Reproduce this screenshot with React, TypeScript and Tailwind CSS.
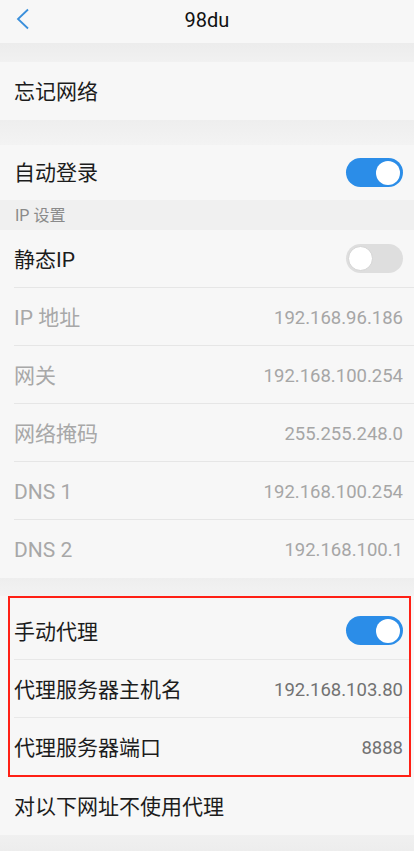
import React from 'react'

const font = { fontFamily: '"Roboto", "Noto Sans CJK SC", sans-serif' }

function Toggle({ on }: { on: boolean }) {
  return on ? (
    <div className="flex h-[29px] w-[57px] items-center justify-end rounded-full bg-[#2b8de8] pr-[3px]">
      <div className="h-[24px] w-[24px] rounded-full bg-white" />
    </div>
  ) : (
    <div className="flex h-[29px] w-[57px] items-center rounded-full bg-[#dedede] pl-[2px]">
      <div className="h-[25px] w-[25px] rounded-full border border-[#d4d4d4] bg-white" />
    </div>
  )
}

function Row({
  label,
  value,
  dim,
  toggle,
  divider,
}: {
  label: string
  value?: string
  dim?: boolean
  toggle?: boolean
  divider?: boolean
}) {
  return (
    <div className="pl-[14px]">
      <div
        className={`flex h-[58px] items-center justify-between pr-[11px] ${
          divider ? 'border-b border-[#e6e6e6]' : ''
        }`}
      >
        <span className={`pt-[4px] text-[21px] ${dim ? 'text-[#a8a8a8]' : 'text-[#1c1c1c]'}`}>{label}</span>
        {value && <span className="pt-[4px] text-[18.5px] text-[#a6a6a6]">{value}</span>}
        {toggle !== undefined && <Toggle on={toggle} />}
      </div>
    </div>
  )
}

export default function App() {
  return (
    <div className="flex min-h-[851px] w-[414px] flex-col bg-[#f7f7f7]" style={font}>
      {/* header */}
      <div className="relative flex h-[43px] items-center justify-center pb-[3px]">
        <svg className="absolute left-[15px] top-[8px]" width="16" height="22" viewBox="0 0 16 22">
          <polyline points="13,1.5 3,11 13,20.5" fill="none" stroke="#3a8fdb" strokeWidth="1.8" />
        </svg>
        <span className="text-[20px] text-[#111]">98du</span>
      </div>
      <div className="h-[19px] bg-gradient-to-b from-[#ececec] to-[#f1f1f1]" />

      <Row label="忘记网络" />
      <div className="h-[25px] bg-gradient-to-b from-[#eeeeee] to-[#f3f3f3]" />

      <div className="flex h-[55px] items-center justify-between pl-[14px] pr-[11px]">
        <span className="pt-[3px] text-[21px] text-[#1c1c1c]">自动登录</span>
        <Toggle on={true} />
      </div>

      <div className="flex h-[30px] items-center bg-[#f0f0f0] pl-[15px]">
        <span className="pt-[2px] text-[16px] text-[#8a8a8a]">IP 设置</span>
      </div>

      <Row label="静态IP" toggle={false} divider />
      <Row label="IP 地址" value="192.168.96.186" dim divider />
      <Row label="网关" value="192.168.100.254" dim divider />
      <Row label="网络掩码" value="255.255.248.0" dim divider />
      <Row label="DNS 1" value="192.168.100.254" dim divider />
      <Row label="DNS 2" value="192.168.100.1" dim />

      <div className="h-[18px] bg-gradient-to-b from-[#eeeeee] to-[#f3f3f3]" />

      <div className="ml-[8px] mr-[3px] border-2 border-[#ff2015] pt-[4px]">
        <div className="pl-[4px]">
          <div className="flex h-[58px] items-center justify-between border-b border-[#e8e8e8] pr-[6px]">
            <span className="pt-[4px] text-[21px] text-[#1c1c1c]">手动代理</span>
            <Toggle on={true} />
          </div>
          <div className="flex h-[58px] items-center justify-between border-b border-[#e8e8e8] pr-[6px]">
            <span className="pt-[4px] text-[21px] text-[#1c1c1c]">代理服务器主机名</span>
            <span className="pt-[4px] text-[18.5px] text-[#727272]">192.168.103.80</span>
          </div>
          <div className="flex h-[57px] items-center justify-between pr-[6px]">
            <span className="pt-[4px] text-[21px] text-[#1c1c1c]">代理服务器端口</span>
            <span className="pt-[4px] text-[18.5px] text-[#727272]">8888</span>
          </div>
        </div>
      </div>

      <div className="flex h-[58px] items-center pl-[14px]">
        <span className="pt-[4px] text-[21px] text-[#1c1c1c]">对以下网址不使用代理</span>
      </div>
      <div className="flex-1 bg-gradient-to-b from-[#f0f0f0] to-[#ededed]" />
    </div>
  )
}
